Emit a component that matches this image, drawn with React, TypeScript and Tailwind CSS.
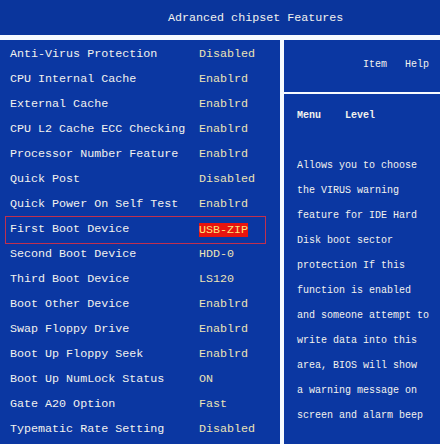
import React from "react";

type Row = { label: string; value: string; selected?: boolean };

const rows: Row[] = [
  { label: "Anti-Virus Protection", value: "Disabled" },
  { label: "CPU Internal Cache", value: "Enablrd" },
  { label: "External Cache", value: "Enablrd" },
  { label: "CPU L2 Cache ECC Checking", value: "Enablrd" },
  { label: "Processor Number Feature", value: "Enablrd" },
  { label: "Quick Post", value: "Disabled" },
  { label: "Quick Power On Self Test", value: "Enablrd" },
  { label: "First Boot Device", value: "USB-ZIP", selected: true },
  { label: "Second Boot Device", value: "HDD-0" },
  { label: "Third Boot Device", value: "LS120" },
  { label: "Boot Other Device", value: "Enablrd" },
  { label: "Swap Floppy Drive", value: "Enablrd" },
  { label: "Boot Up Floppy Seek", value: "Enablrd" },
  { label: "Boot Up NumLock Status", value: "ON" },
  { label: "Gate A20 Option", value: "Fast" },
  { label: "Typematic Rate Setting", value: "Disabled" },
];

const help = [
  "Allows you to choose",
  "the VIRUS warning",
  "feature for IDE Hard",
  "Disk boot sector",
  "protection If this",
  "function is enabled",
  "and someone attempt to",
  "write data into this",
  "area, BIOS will show",
  "a warning message on",
  "screen and alarm beep",
];

const App: React.FC = () => {
  return (
    <div className="w-[440px] h-[444px] overflow-hidden bg-[#f6faff] font-['Liberation_Mono',monospace] text-[#f2f2ee]">
      {/* title bar */}
      <div className="h-[35px] bg-[#0a359c] flex items-center pl-[168px] pt-[3px] text-[11.7px]">
        Adranced chipset Features
      </div>

      <div className="flex mt-[5px] h-[404px]">
        {/* settings list */}
        <div className="w-[280px] bg-[#0b37a2] pt-[2px]">
          {rows.map((row) => (
            <div key={row.label} className="relative h-[25px] flex items-center text-[11.7px]">
              {row.selected && (
                <div className="absolute left-[5px] top-[-1px] w-[261px] h-[28px] border border-[#c0304e]"></div>
              )}
              <span className="w-[199px] pl-[10px] whitespace-pre">{row.label}</span>
              {row.selected ? (
                <span className="bg-[#e8140e] text-[#ffe27a] leading-[14px]">{row.value}</span>
              ) : (
                <span className="text-[#ece3b6]">{row.value}</span>
              )}
            </div>
          ))}
        </div>

        {/* help panel */}
        <div className="ml-[4px] flex-1 flex flex-col">
          <div className="h-[52px] bg-[#0b37a2] pl-[79px] pt-[17px] text-[10px] whitespace-pre">
            Item   Help
          </div>
          <div className="h-[2px]"></div>
          <div className="flex-1 bg-[#0b37a2] pl-[13px] pt-[9px] text-[10px] leading-[25px]">
            <div className="whitespace-pre font-bold">Menu    Level</div>
            <div className="h-[25px]"></div>
            {help.map((line) => (
              <div key={line} className="whitespace-pre">{line}</div>
            ))}
          </div>
        </div>
      </div>
    </div>
  );
};

export default App;
